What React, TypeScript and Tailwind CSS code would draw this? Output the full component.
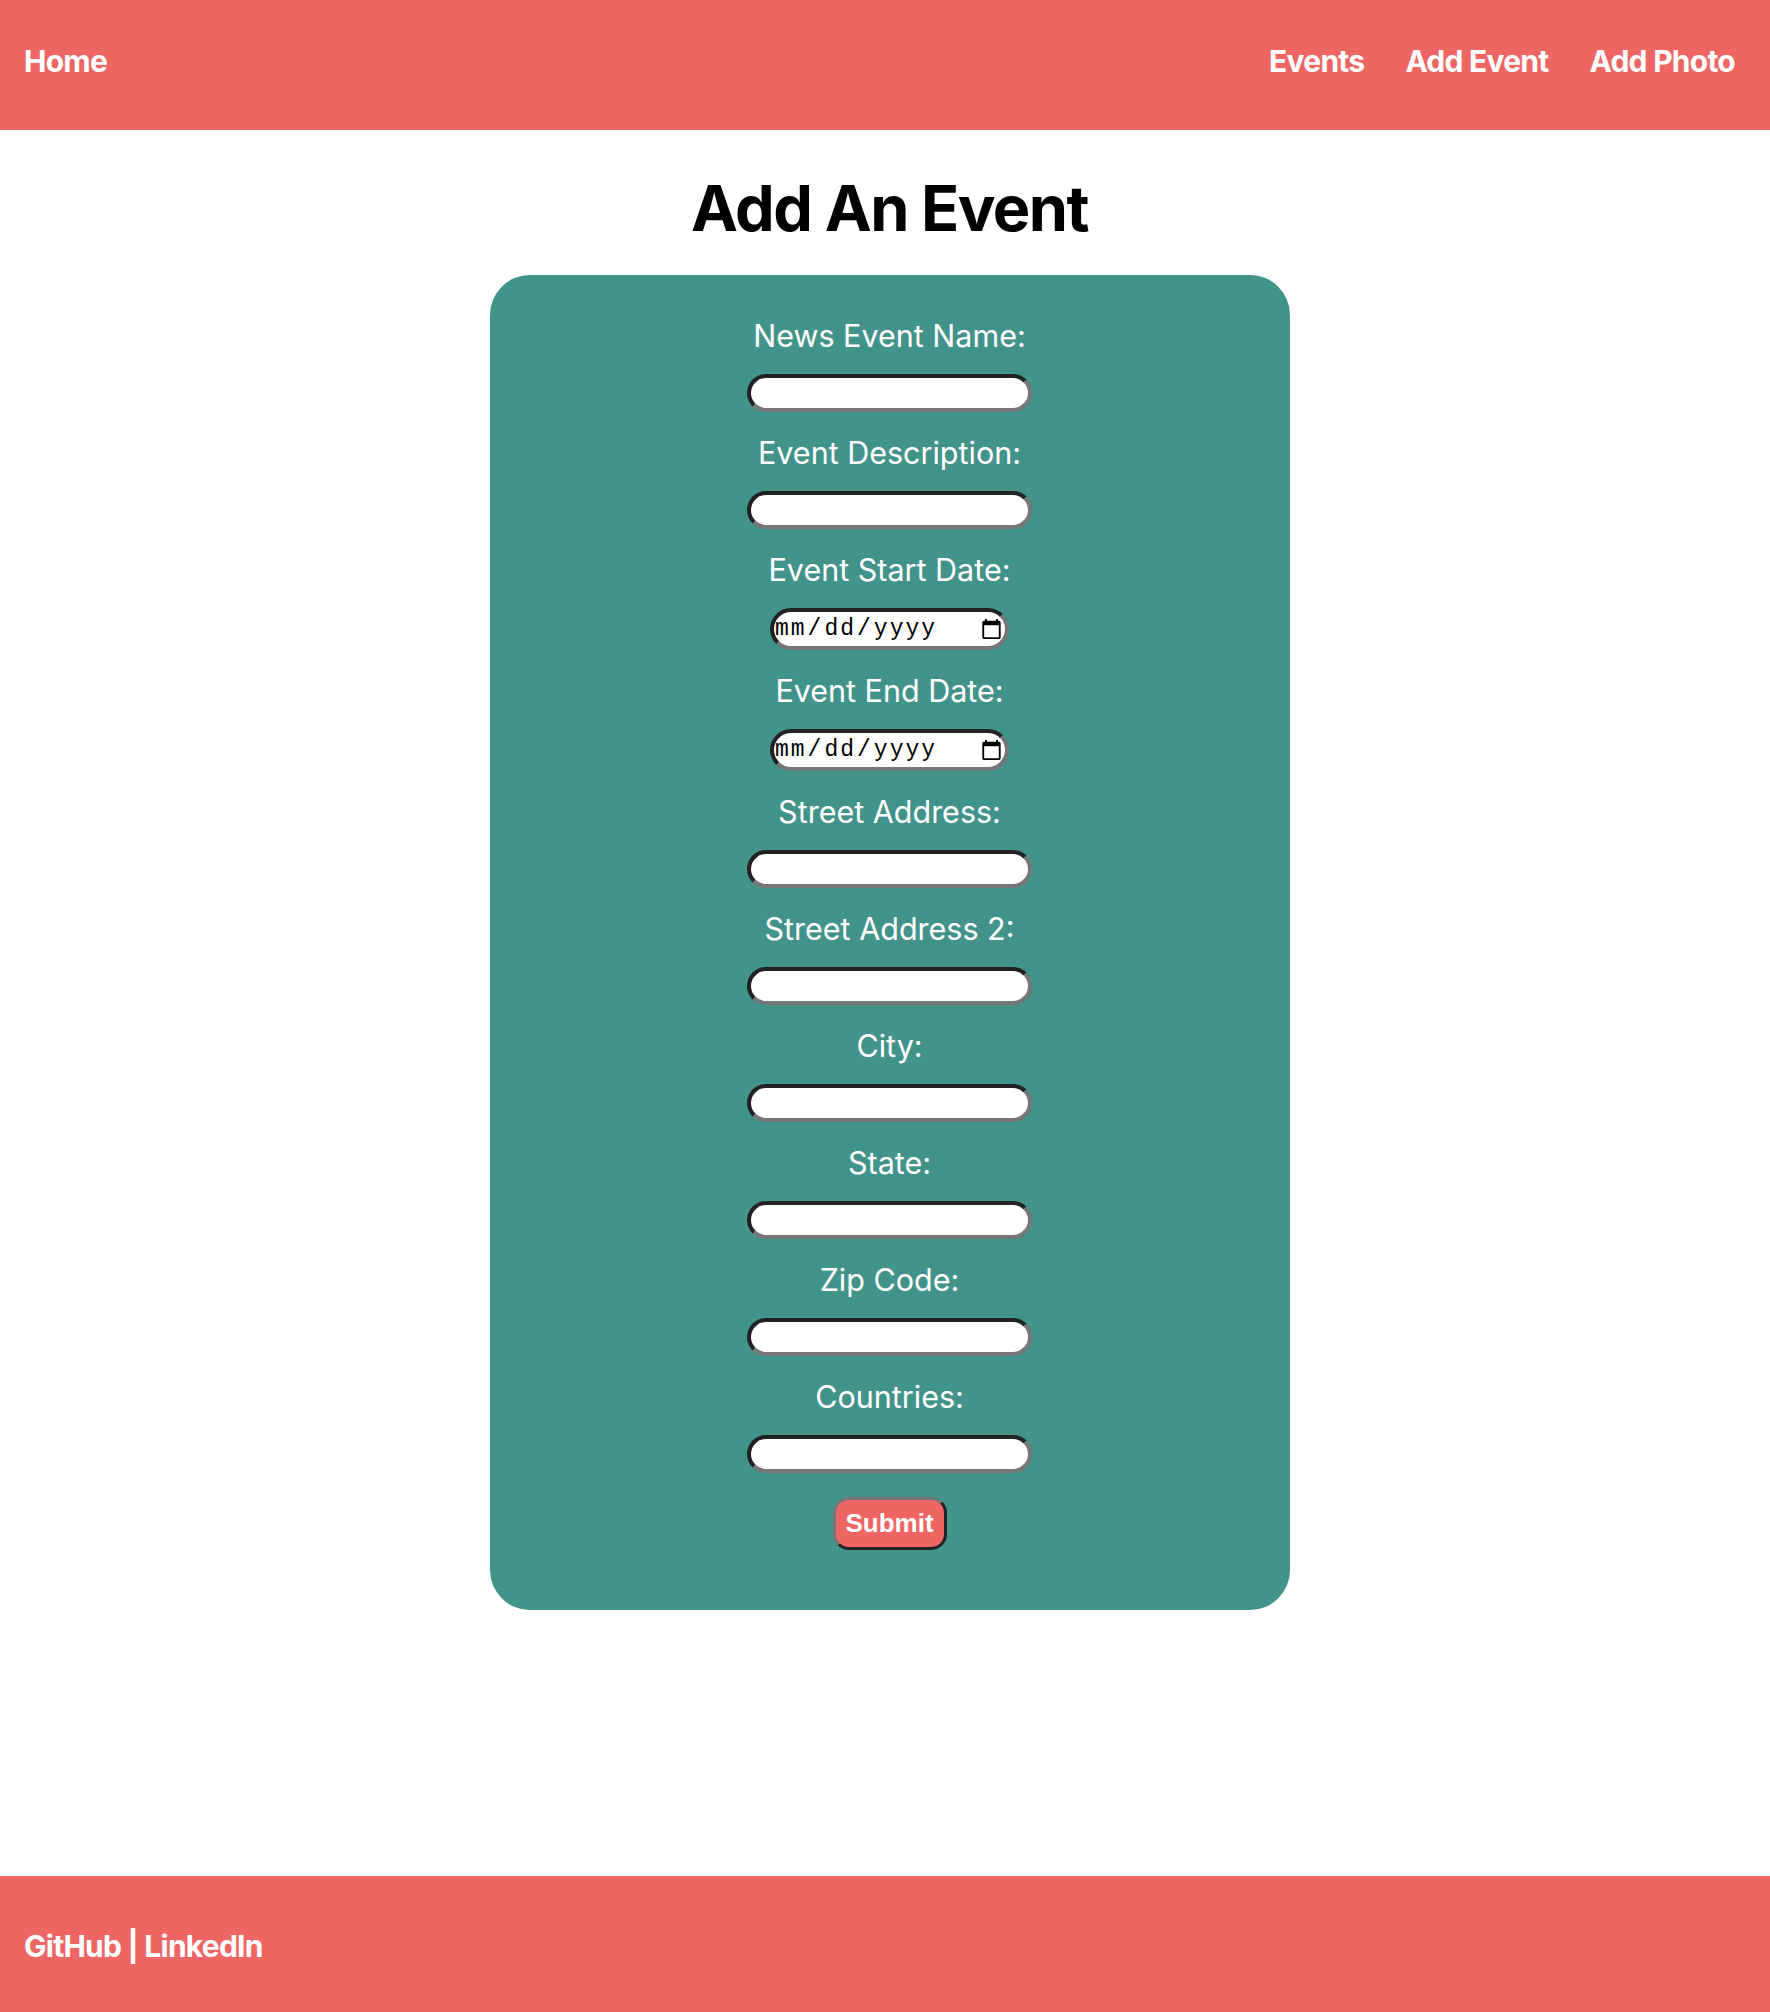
import React from 'react';

const fields: { label: string; type: 'text' | 'date' }[] = [
  { label: 'News Event Name:', type: 'text' },
  { label: 'Event Description:', type: 'text' },
  { label: 'Event Start Date:', type: 'date' },
  { label: 'Event End Date:', type: 'date' },
  { label: 'Street Address:', type: 'text' },
  { label: 'Street Address 2:', type: 'text' },
  { label: 'City:', type: 'text' },
  { label: 'State:', type: 'text' },
  { label: 'Zip Code:', type: 'text' },
  { label: 'Countries:', type: 'text' },
];

const insetBorder =
  'border-[4px] border-t-[#222] border-l-[#222] border-r-[#777] border-b-[#777] bg-white rounded-full outline-none';

const App: React.FC = () => {
  return (
    <div className="min-h-screen flex flex-col bg-white font-['Inter',sans-serif]">
      <header className="h-[130px] bg-[#ed6663] flex items-center justify-between px-[24px] pb-[8px] text-white text-[30px] font-bold tracking-tight">
        <a href="#">Home</a>
        <nav className="flex items-center gap-[41px] pr-[11px]">
          <a href="#">Events</a>
          <a href="#">Add Event</a>
          <a href="#">Add Photo</a>
        </nav>
      </header>

      <main className="flex-1 flex flex-col items-center pt-[47px] pl-[9px]">
        <h1 className="text-[63px] leading-none font-bold tracking-tight text-black">Add An Event</h1>

        <form
          className="mt-[35px] w-[800px] rounded-[40px] bg-[#42938a] pt-[43px] pb-[60px] flex flex-col items-center gap-[23px]"
          onSubmit={(e) => e.preventDefault()}
        >
          {fields.map((f) => (
            <div key={f.label} className="flex flex-col items-center">
              <label className="text-white text-[30.5px] leading-[36px] mb-[20px]">{f.label}</label>
              {f.type === 'date' ? (
                <input
                  type="date"
                  className={`${insetBorder} w-[239px] h-[42px] px-0 text-[23px] tracking-[2px] text-black font-['Liberation_Mono',monospace]`}
                />
              ) : (
                <input type="text" className={`${insetBorder} w-[285px] h-[38px] px-3 text-[20px]`} />
              )}
            </div>
          ))}
          <button
            type="submit"
            className="mt-[1px] h-[53px] w-[114px] rounded-[16px] bg-[#ed6663] text-white text-[26px] font-bold font-['Liberation_Sans',sans-serif] border-[3px] border-t-[#777] border-l-[#777] border-r-[#222] border-b-[#222]"
          >
            Submit
          </button>
        </form>
      </main>

      <footer className="h-[136px] bg-[#ed6663] flex items-center px-[24px] pt-[4px] text-white text-[30px] font-bold tracking-tight">
        GitHub | LinkedIn
      </footer>
    </div>
  );
};

export default App;
